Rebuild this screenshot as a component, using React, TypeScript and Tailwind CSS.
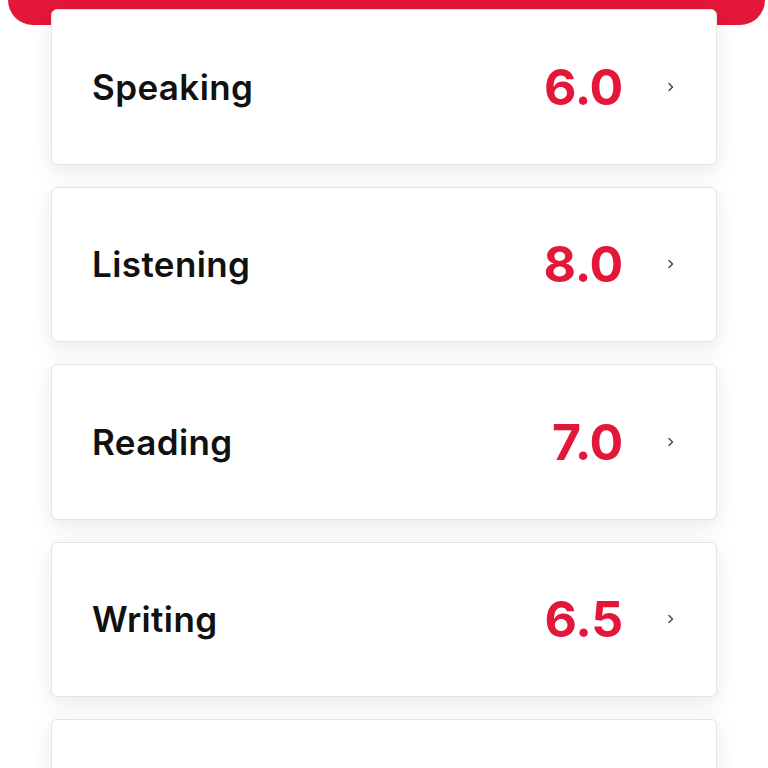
import React from "react";

const rows = [
  { label: "Speaking", score: "6.0" },
  { label: "Listening", score: "8.0" },
  { label: "Reading", score: "7.0" },
  { label: "Writing", score: "6.5" },
  { label: "", score: "" },
];

export default function App() {
  return (
    <div className="w-[768px] h-[768px] overflow-hidden bg-white" style={{ fontFamily: "Inter, 'Noto Sans', sans-serif" }}>
      <div className="mx-[8px] mr-[3px] h-[25px] rounded-b-[26px] bg-[#e3173a]" />
      <div className="-mt-[16px] px-[51px] flex flex-col gap-[22px]">
        {rows.map((r, i) => (
          <div
            key={i}
            className="relative h-[155.5px] shrink-0 rounded-[6px] bg-white border border-[#e4e4e4] shadow-[0_6px_22px_rgba(0,0,0,0.09)] flex items-center pl-[40px]"
          >
            {r.label && (
              <>
                <div className="text-[35px] font-semibold text-[#111] tracking-[0.4px]">{r.label}</div>
                <div className="flex-1 text-right text-[50px] font-bold text-[#e3173a] leading-none tracking-[-0.3px]">{r.score}</div>
                <div className="w-[93px] flex justify-center pl-[2px]">
                  <svg width="8" height="10" viewBox="0 0 8 10" fill="none">
                    <path d="M2 1.5 L5.5 5 L2 8.5" stroke="#444" strokeWidth="1.4" strokeLinecap="round" strokeLinejoin="round" />
                  </svg>
                </div>
              </>
            )}
          </div>
        ))}
      </div>
    </div>
  );
}
